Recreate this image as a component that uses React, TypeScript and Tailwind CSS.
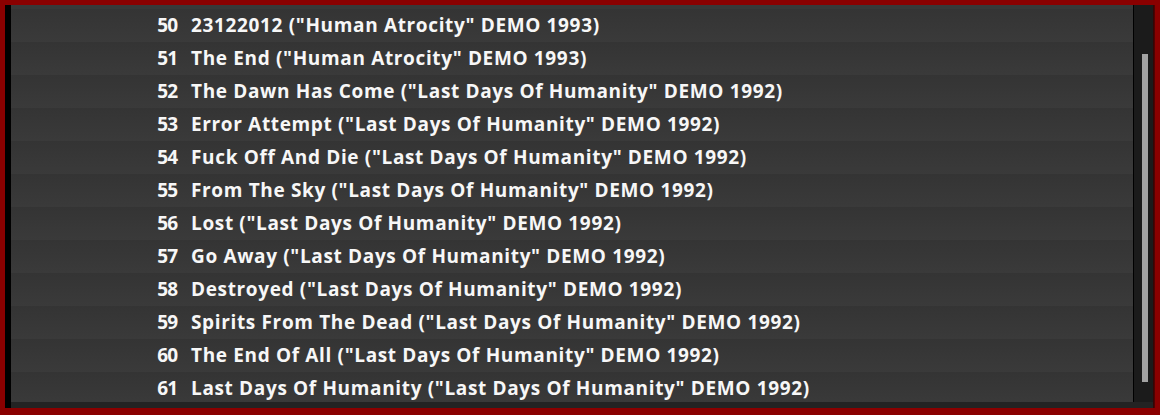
import React from "react";

const tracks: [number, string][] = [
  [50, '23122012 ("Human Atrocity" DEMO 1993)'],
  [51, 'The End ("Human Atrocity" DEMO 1993)'],
  [52, 'The Dawn Has Come ("Last Days Of Humanity" DEMO 1992)'],
  [53, 'Error Attempt ("Last Days Of Humanity" DEMO 1992)'],
  [54, 'Fuck Off And Die ("Last Days Of Humanity" DEMO 1992)'],
  [55, 'From The Sky ("Last Days Of Humanity" DEMO 1992)'],
  [56, 'Lost ("Last Days Of Humanity" DEMO 1992)'],
  [57, 'Go Away ("Last Days Of Humanity" DEMO 1992)'],
  [58, 'Destroyed ("Last Days Of Humanity" DEMO 1992)'],
  [59, 'Spirits From The Dead ("Last Days Of Humanity" DEMO 1992)'],
  [60, 'The End Of All ("Last Days Of Humanity" DEMO 1992)'],
  [61, 'Last Days Of Humanity ("Last Days Of Humanity" DEMO 1992)'],
];

export default function App() {
  return (
    <div className="w-[1160px] h-[415px] bg-[#8a0000] pt-[5px] pl-[5px] pr-[5px] pb-[7px] overflow-hidden">
      <div className="flex h-full">
        <div className="w-[6px] bg-black" />
        <div className="flex flex-1 flex-col min-w-0">
          <div className="flex flex-1 min-h-0">
            <div
              className="flex-1 min-w-0 overflow-hidden bg-[#383838] pt-[4px] text-[19px] font-bold text-[#f7f7f7]"
              style={{ fontFamily: '"Open Sans", "Noto Sans", sans-serif' }}
            >
              {tracks.map(([n, title]) => (
                <div
                  key={n}
                  className="flex h-[33px] items-center bg-gradient-to-b from-[#343434] to-[#3a3a3a] whitespace-nowrap"
                >
                  <span className="w-[166px] text-right tracking-[-1px]">{n}</span>
                  <span className="ml-[14px] tracking-[0.65px]">{title}</span>
                </div>
              ))}
            </div>
            <div className="w-px bg-black" />
            <div className="w-[19px] bg-[#1b1b1b] pt-[49px] pl-[8px]">
              <div className="w-[6px] h-[328px] bg-[#a3a3a3]" />
            </div>
          </div>
          <div className="h-[6px] bg-[#232323]" />
        </div>
        <div className="w-[2px] bg-gradient-to-r from-[#2a0505] to-[#5a0000]" />
      </div>
    </div>
  );
}
